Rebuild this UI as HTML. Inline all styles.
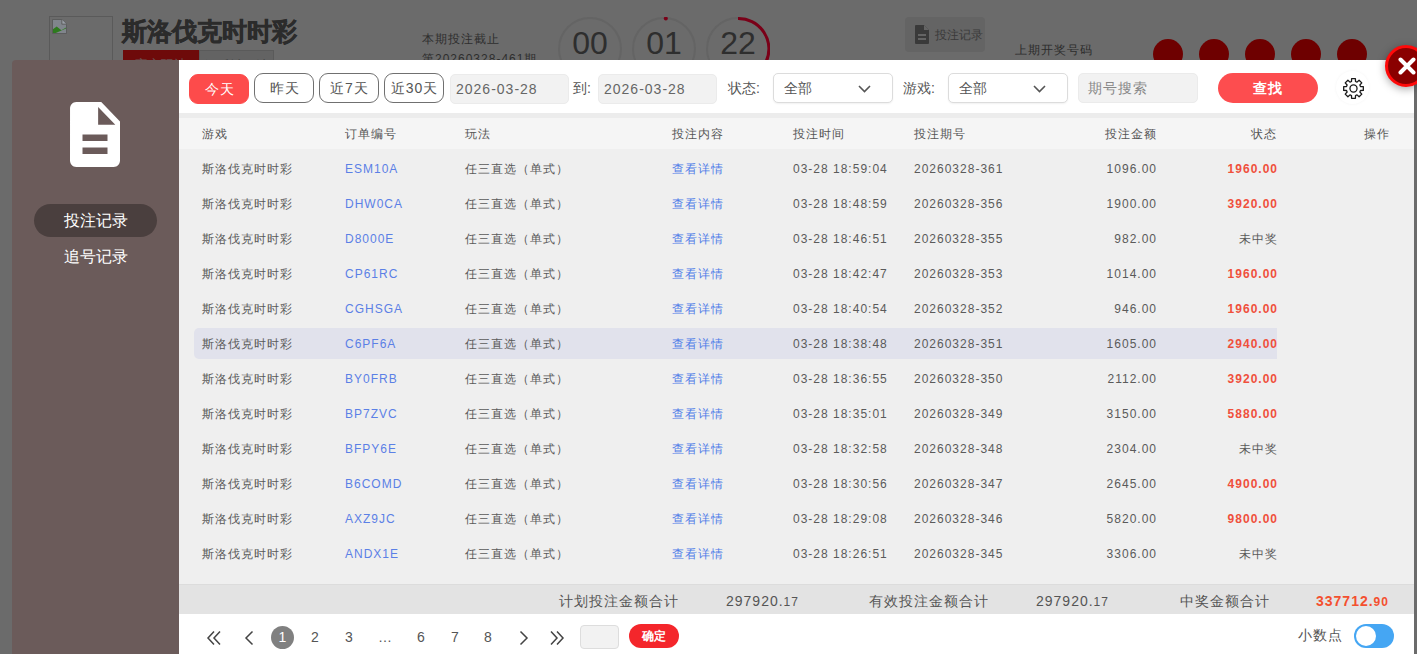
<!DOCTYPE html>
<html><head><meta charset="utf-8">
<style>
*{box-sizing:border-box;margin:0;padding:0}
html,body{width:1417px;height:654px;overflow:hidden}
body{background:#6b6b6b;font-family:"Liberation Sans",sans-serif;position:relative;color:#333}
.abs{position:absolute}
/* background page */
.imgph{left:49px;top:16px;width:64px;height:60px;border:1px solid #5a5a5a}
.brk{left:52px;top:19px;width:15px;height:15px}
.title{left:122px;top:15px;font-size:25px;font-weight:bold;color:#2b2b2b;white-space:nowrap;-webkit-text-stroke:0.6px #2b2b2b}
.rbtn{left:123px;top:50px;width:76px;height:20px;background:#6e0a0a;color:#6b5050;font-size:13px;line-height:20px;padding-top:5px;text-align:center;overflow:hidden}
.gbtn{left:199px;top:50px;width:75px;height:20px;background:#636363;border:1px solid #5a5a5a;color:#3a3a3a;font-size:13px;line-height:20px;padding-top:5px;text-align:center;overflow:hidden}
.cut1{left:422px;top:31px;font-size:12px;letter-spacing:1px;color:#2e2e2e;white-space:nowrap}
.cut2{left:422px;top:51px;font-size:12px;letter-spacing:1px;color:#2e2e2e;white-space:nowrap}
.circ{top:17px;width:64px;height:64px;border-radius:50%;border:2px solid #646464;font-size:32px;color:#2e2e2e;text-align:center;line-height:48px}
.bg-rec{left:905px;top:17px;width:80px;height:35px;background:#646464;border-radius:4px;color:#3a3a3a;font-size:12px}
.bg-rec span{position:absolute;left:30px;top:10px;white-space:nowrap}
.lastnum{left:1015px;top:42px;font-size:12px;letter-spacing:1px;color:#2b2b2b;white-space:nowrap}
.ball{top:39px;width:30px;height:30px;border-radius:50%;background:#6e0000}
/* modal */
.side{left:12px;top:60px;width:167px;height:600px;background:#6b5b5a;border-radius:4px 0 0 0}
.main{left:179px;top:60px;width:1235px;height:600px;background:#fff}
.doc{left:70px;top:102px;width:50px;height:65px}
.pill{left:34px;top:204px;width:123px;height:33px;border-radius:17px;background:#4a3f3e;color:#fff;font-size:16px;text-align:center;line-height:33px}
.side2{left:34px;top:240px;width:123px;height:33px;color:#fff;font-size:16px;text-align:center;line-height:33px}
/* filter */
.fb{top:73px;width:60px;height:30px;border:1px solid #707070;border-radius:9px;color:#555;font-size:14px;text-align:center;line-height:28px;background:#fff;letter-spacing:1px;text-indent:1px}
.fb.on{top:74px;background:#fd4b4b;border-color:#fd4b4b;color:#fff}
.inp{top:74px;width:119px;height:30px;background:#f2f2f2;border:1px solid #ebebeb;border-radius:5px;color:#666;font-size:14px;letter-spacing:1px;padding-left:5px;line-height:28px}
.lbl{top:74px;font-size:14px;color:#555;line-height:28px;white-space:nowrap}
.sel{top:73px;width:120px;height:30px;background:#fff;border:1px solid #dcdcdc;border-radius:5px;color:#555;font-size:14px;padding-left:10px;line-height:28px;box-shadow:0 1px 2px rgba(0,0,0,.06)}
.sel svg{position:absolute;right:21px;top:11px}
.search{left:1078px;top:73px;width:120px;height:30px;background:#f2f2f2;border:1px solid #ebebeb;border-radius:5px;color:#888;font-size:14px;padding-left:9px;line-height:28px;letter-spacing:1px}
.find{left:1218px;top:73px;width:100px;height:30px;border-radius:15px;background:#fd4d4f;color:#fff;font-size:14px;font-weight:bold;text-align:center;line-height:30px;letter-spacing:1px}
.gear{left:1336px;top:71px;width:33px;height:33px;border-radius:50%;box-shadow:0 0 3px rgba(0,0,0,.05)}
.gear svg{position:absolute;left:6px;top:6px}
/* table */
.sep{left:179px;top:113px;width:1235px;height:5px;background:#ececec}
.thead{left:179px;top:118px;width:1235px;height:31px;background:#f5f5f5}
.tbody{left:179px;top:149px;width:1235px;height:435px;background:#efefef}
.th{position:absolute;top:126px;font-size:12px;letter-spacing:1px;color:#555;white-space:nowrap;line-height:16px}
.row{position:absolute;left:194px;width:1083px;height:31px}
.row.hl{background:#e1e2ec;border-radius:5px 0 0 5px}
.c{position:absolute;top:8px;font-size:12px;letter-spacing:1px;color:#5a5a5a;white-space:nowrap;line-height:16px}
.g{left:8px}
.oid{left:151px;color:#5b80e6}
.wf{left:271px}
.det{left:478px;color:#4f7de8}
.tm{left:599px}
.per{left:720px}
.amt{right:120px}
.st{right:-1px}
.win{color:#f0503c;font-weight:bold}
/* summary */
.sum{left:179px;top:584px;width:1235px;height:30px;background:#e3e3e3;border-top:1px solid #dcdcdc}
.sl{position:absolute;top:592px;font-size:14px;letter-spacing:1px;color:#555;white-space:nowrap;line-height:18px}
.sv{position:absolute;top:592px;font-size:14px;letter-spacing:1px;color:#555;white-space:nowrap;line-height:18px}
.sv small{font-size:12px}
.sv.red{color:#f4502f;font-weight:bold}
/* pagination */
.pg{position:absolute;top:628px;font-size:14px;color:#555;line-height:18px;text-align:center;width:20px}
.pcur{left:271px;top:626px;width:23px;height:23px;border-radius:50%;background:#808080;color:#fff;font-size:14px;text-align:center;line-height:23px}
.pinp{left:580px;top:625px;width:39px;height:24px;background:#f2f2f2;border:1px solid #dddddd;border-radius:4px}
.pok{left:629px;top:624px;width:50px;height:24px;border-radius:12px;background:#f4262b;color:#fff;font-size:12px;font-weight:bold;text-align:center;line-height:24px}
.dec{left:1298px;top:626px;font-size:14px;letter-spacing:1px;color:#555;white-space:nowrap;line-height:18px}
.tog{left:1354px;top:624px;width:40px;height:24px;border-radius:12px;background:#45a6f3}
.tog i{position:absolute;left:2px;top:2px;width:20px;height:20px;border-radius:50%;background:#fff}
/* close */
.close{left:1385px;top:45px;width:42px;height:42px;border-radius:50%;background:#8a0000;border:3px solid #ff0a0a;box-shadow:0 2px 8px rgba(0,0,0,.35)}
.close svg{position:absolute;left:10px;top:9px}

</style></head><body>
<div class="abs imgph"></div>
<svg class="abs brk" viewBox="0 0 16 16"><path d="M0.5 0.5h10l5 5v10h-15z" fill="#80858c" stroke="#5a5a5a" stroke-width="1"/><path d="M10.5 0.5v5h5" fill="#9aa0a8" stroke="#5a5a5a" stroke-width="1"/><path d="M1 15L1 11 5 8 10 12 15 9 15 10 4 15z" fill="#2e7a1e"/></svg>
<div class="abs title">斯洛伐克时时彩</div>
<div class="abs rbtn">官方玩法</div><div class="abs gbtn">娱乐城玩法</div>
<div class="abs cut1">本期投注截止</div>
<div class="abs cut2">第20260328-461期</div>
<div class="abs circ" style="left:558px">00</div>
<div class="abs circ" style="left:632px">01</div>
<div class="abs circ" style="left:706px">22</div>
<svg class="abs" style="left:632px;top:17px" width="64" height="64" viewBox="0 0 64 64"><circle cx="33.8" cy="1.5" r="2" fill="#7a0018"/></svg>
<svg class="abs" style="left:706px;top:17px" width="64" height="64" viewBox="0 0 64 64"><path d="M32 1.5 A30.5 30.5 0 0 1 60 45" fill="none" stroke="#7a0018" stroke-width="3"/></svg>
<div class="abs bg-rec"><svg style="position:absolute;left:10px;top:8px" width="14" height="19" viewBox="0 0 14 19"><path d="M1 0h8l5 5v13a1 1 0 0 1-1 1H1a1 1 0 0 1-1-1V1a1 1 0 0 1 1-1z" fill="#3a3a3a"/><path d="M9 0v5h5z" fill="#646464"/><rect x="3" y="9" width="8" height="2" fill="#646464"/><rect x="3" y="13" width="8" height="2" fill="#646464"/></svg><span>投注记录</span></div>
<div class="abs lastnum">上期开奖号码</div>
<div class="abs ball" style="left:1153px"></div>
<div class="abs ball" style="left:1199px"></div>
<div class="abs ball" style="left:1245px"></div>
<div class="abs ball" style="left:1291px"></div>
<div class="abs ball" style="left:1337px"></div>

<div class="abs side"></div>
<svg class="abs doc" viewBox="4 2 16 20" preserveAspectRatio="none"><path fill="#fff" fill-rule="evenodd" d="M14 2H6c-1.1 0-1.99.9-1.99 2L4 20c0 1.1.89 2 1.99 2H18c1.1 0 2-.9 2-2V8l-6-6zm2 16H8v-2h8v2zm0-4H8v-2h8v2zm-3-5V3.5L18.5 9H13z"/></svg>
<div class="abs pill">投注记录</div>
<div class="abs side2">追号记录</div>

<div class="abs main"></div>
<div class="abs fb on" style="left:189px">今天</div>
<div class="abs fb" style="left:254px">昨天</div>
<div class="abs fb" style="left:319px">近7天</div>
<div class="abs fb" style="left:384px">近30天</div>
<div class="abs inp" style="left:450px">2026-03-28</div>
<div class="abs lbl" style="left:573px">到:</div>
<div class="abs inp" style="left:598px">2026-03-28</div>
<div class="abs lbl" style="left:728px">状态:</div>
<div class="abs sel" style="left:773px">全部<svg width="13" height="8" viewBox="0 0 13 8"><path d="M1 1l5.5 5.5L12 1" fill="none" stroke="#555" stroke-width="1.6"/></svg></div>
<div class="abs lbl" style="left:903px">游戏:</div>
<div class="abs sel" style="left:948px">全部<svg width="13" height="8" viewBox="0 0 13 8"><path d="M1 1l5.5 5.5L12 1" fill="none" stroke="#555" stroke-width="1.6"/></svg></div>
<div class="abs search">期号搜索</div>
<div class="abs find">查找</div>
<div class="abs gear"></div><svg class="abs" style="left:1340.5px;top:75.5px" width="25" height="25" viewBox="0 0 24 24"><path fill="none" stroke="#1a1a1a" stroke-width="1.25" stroke-linejoin="round" d="M10.07 5.27 L10.17 2.58 L13.83 2.58 L13.93 5.27 L15.39 5.88 L17.37 4.04 L19.96 6.63 L18.12 8.61 L18.73 10.07 L21.42 10.17 L21.42 13.83 L18.73 13.93 L18.12 15.39 L19.96 17.37 L17.37 19.96 L15.39 18.12 L13.93 18.73 L13.83 21.42 L10.17 21.42 L10.07 18.73 L8.61 18.12 L6.63 19.96 L4.04 17.37 L5.88 15.39 L5.27 13.93 L2.58 13.83 L2.58 10.17 L5.27 10.07 L5.88 8.61 L4.04 6.63 L6.63 4.04 L8.61 5.88Z"/><circle cx="12" cy="12" r="3.4" fill="none" stroke="#1a1a1a" stroke-width="1.25"/></svg>

<div class="abs sep"></div>
<div class="abs thead"></div>
<div class="abs tbody"></div>
<span class="th" style="left:202px">游戏</span>
<span class="th" style="left:345px">订单编号</span>
<span class="th" style="left:465px">玩法</span>
<span class="th" style="left:672px">投注内容</span>
<span class="th" style="left:793px">投注时间</span>
<span class="th" style="left:914px">投注期号</span>
<span class="th" style="right:260px">投注金额</span>
<span class="th" style="right:140px">状态</span>
<span class="th" style="right:27px">操作</span>
<div class="row" style="top:153px"><span class="c g">斯洛伐克时时彩</span><span class="c oid">ESM10A</span><span class="c wf">任三直选（单式）</span><span class="c det">查看详情</span><span class="c tm">03-28 18:59:04</span><span class="c per">20260328-361</span><span class="c amt">1096.00</span><span class="c st win">1960.00</span></div>
<div class="row" style="top:188px"><span class="c g">斯洛伐克时时彩</span><span class="c oid">DHW0CA</span><span class="c wf">任三直选（单式）</span><span class="c det">查看详情</span><span class="c tm">03-28 18:48:59</span><span class="c per">20260328-356</span><span class="c amt">1900.00</span><span class="c st win">3920.00</span></div>
<div class="row" style="top:223px"><span class="c g">斯洛伐克时时彩</span><span class="c oid">D8000E</span><span class="c wf">任三直选（单式）</span><span class="c det">查看详情</span><span class="c tm">03-28 18:46:51</span><span class="c per">20260328-355</span><span class="c amt">982.00</span><span class="c st">未中奖</span></div>
<div class="row" style="top:258px"><span class="c g">斯洛伐克时时彩</span><span class="c oid">CP61RC</span><span class="c wf">任三直选（单式）</span><span class="c det">查看详情</span><span class="c tm">03-28 18:42:47</span><span class="c per">20260328-353</span><span class="c amt">1014.00</span><span class="c st win">1960.00</span></div>
<div class="row" style="top:293px"><span class="c g">斯洛伐克时时彩</span><span class="c oid">CGHSGA</span><span class="c wf">任三直选（单式）</span><span class="c det">查看详情</span><span class="c tm">03-28 18:40:54</span><span class="c per">20260328-352</span><span class="c amt">946.00</span><span class="c st win">1960.00</span></div>
<div class="row hl" style="top:328px"><span class="c g">斯洛伐克时时彩</span><span class="c oid">C6PF6A</span><span class="c wf">任三直选（单式）</span><span class="c det">查看详情</span><span class="c tm">03-28 18:38:48</span><span class="c per">20260328-351</span><span class="c amt">1605.00</span><span class="c st win">2940.00</span></div>
<div class="row" style="top:363px"><span class="c g">斯洛伐克时时彩</span><span class="c oid">BY0FRB</span><span class="c wf">任三直选（单式）</span><span class="c det">查看详情</span><span class="c tm">03-28 18:36:55</span><span class="c per">20260328-350</span><span class="c amt">2112.00</span><span class="c st win">3920.00</span></div>
<div class="row" style="top:398px"><span class="c g">斯洛伐克时时彩</span><span class="c oid">BP7ZVC</span><span class="c wf">任三直选（单式）</span><span class="c det">查看详情</span><span class="c tm">03-28 18:35:01</span><span class="c per">20260328-349</span><span class="c amt">3150.00</span><span class="c st win">5880.00</span></div>
<div class="row" style="top:433px"><span class="c g">斯洛伐克时时彩</span><span class="c oid">BFPY6E</span><span class="c wf">任三直选（单式）</span><span class="c det">查看详情</span><span class="c tm">03-28 18:32:58</span><span class="c per">20260328-348</span><span class="c amt">2304.00</span><span class="c st">未中奖</span></div>
<div class="row" style="top:468px"><span class="c g">斯洛伐克时时彩</span><span class="c oid">B6COMD</span><span class="c wf">任三直选（单式）</span><span class="c det">查看详情</span><span class="c tm">03-28 18:30:56</span><span class="c per">20260328-347</span><span class="c amt">2645.00</span><span class="c st win">4900.00</span></div>
<div class="row" style="top:503px"><span class="c g">斯洛伐克时时彩</span><span class="c oid">AXZ9JC</span><span class="c wf">任三直选（单式）</span><span class="c det">查看详情</span><span class="c tm">03-28 18:29:08</span><span class="c per">20260328-346</span><span class="c amt">5820.00</span><span class="c st win">9800.00</span></div>
<div class="row" style="top:538px"><span class="c g">斯洛伐克时时彩</span><span class="c oid">ANDX1E</span><span class="c wf">任三直选（单式）</span><span class="c det">查看详情</span><span class="c tm">03-28 18:26:51</span><span class="c per">20260328-345</span><span class="c amt">3306.00</span><span class="c st">未中奖</span></div>

<div class="abs sum"></div>
<span class="sl" style="left:559px">计划投注金额合计</span>
<span class="sv" style="left:726px">297920.<small>17</small></span>
<span class="sl" style="left:869px">有效投注金额合计</span>
<span class="sv" style="left:1036px">297920.<small>17</small></span>
<span class="sl" style="left:1180px">中奖金额合计</span>
<span class="sv red" style="left:1316px">337712.<small>90</small></span>

<svg class="abs" style="left:206px;top:630px" width="16" height="16" viewBox="0 0 16 16"><path d="M8 1.5L2 8l6 6.5M14 1.5L8 8l6 6.5" fill="none" stroke="#444" stroke-width="1.5"/></svg>
<svg class="abs" style="left:244px;top:630px" width="10" height="16" viewBox="0 0 10 16"><path d="M8.5 1.5L2 8l6.5 6.5" fill="none" stroke="#444" stroke-width="1.5"/></svg>
<div class="abs pcur">1</div>
<span class="pg" style="left:305px">2</span>
<span class="pg" style="left:339px">3</span>
<span class="pg" style="left:375px">…</span>
<span class="pg" style="left:411px">6</span>
<span class="pg" style="left:445px">7</span>
<span class="pg" style="left:478px">8</span>
<svg class="abs" style="left:519px;top:630px" width="10" height="16" viewBox="0 0 10 16"><path d="M1.5 1.5L8 8l-6.5 6.5" fill="none" stroke="#444" stroke-width="1.5"/></svg>
<svg class="abs" style="left:549px;top:630px" width="16" height="16" viewBox="0 0 16 16"><path d="M2 1.5L8 8l-6 6.5M8 1.5L14 8l-6 6.5" fill="none" stroke="#444" stroke-width="1.5"/></svg>
<div class="abs pinp"></div>
<div class="abs pok">确定</div>
<span class="abs dec">小数点</span>
<div class="abs tog"><i></i></div>

<div class="abs close"><svg width="18" height="18" viewBox="0 0 18 18"><path d="M2.5 2.5l13 13M15.5 2.5l-13 13" stroke="#fff" stroke-width="4" stroke-linecap="round"/></svg></div>

</body></html>
